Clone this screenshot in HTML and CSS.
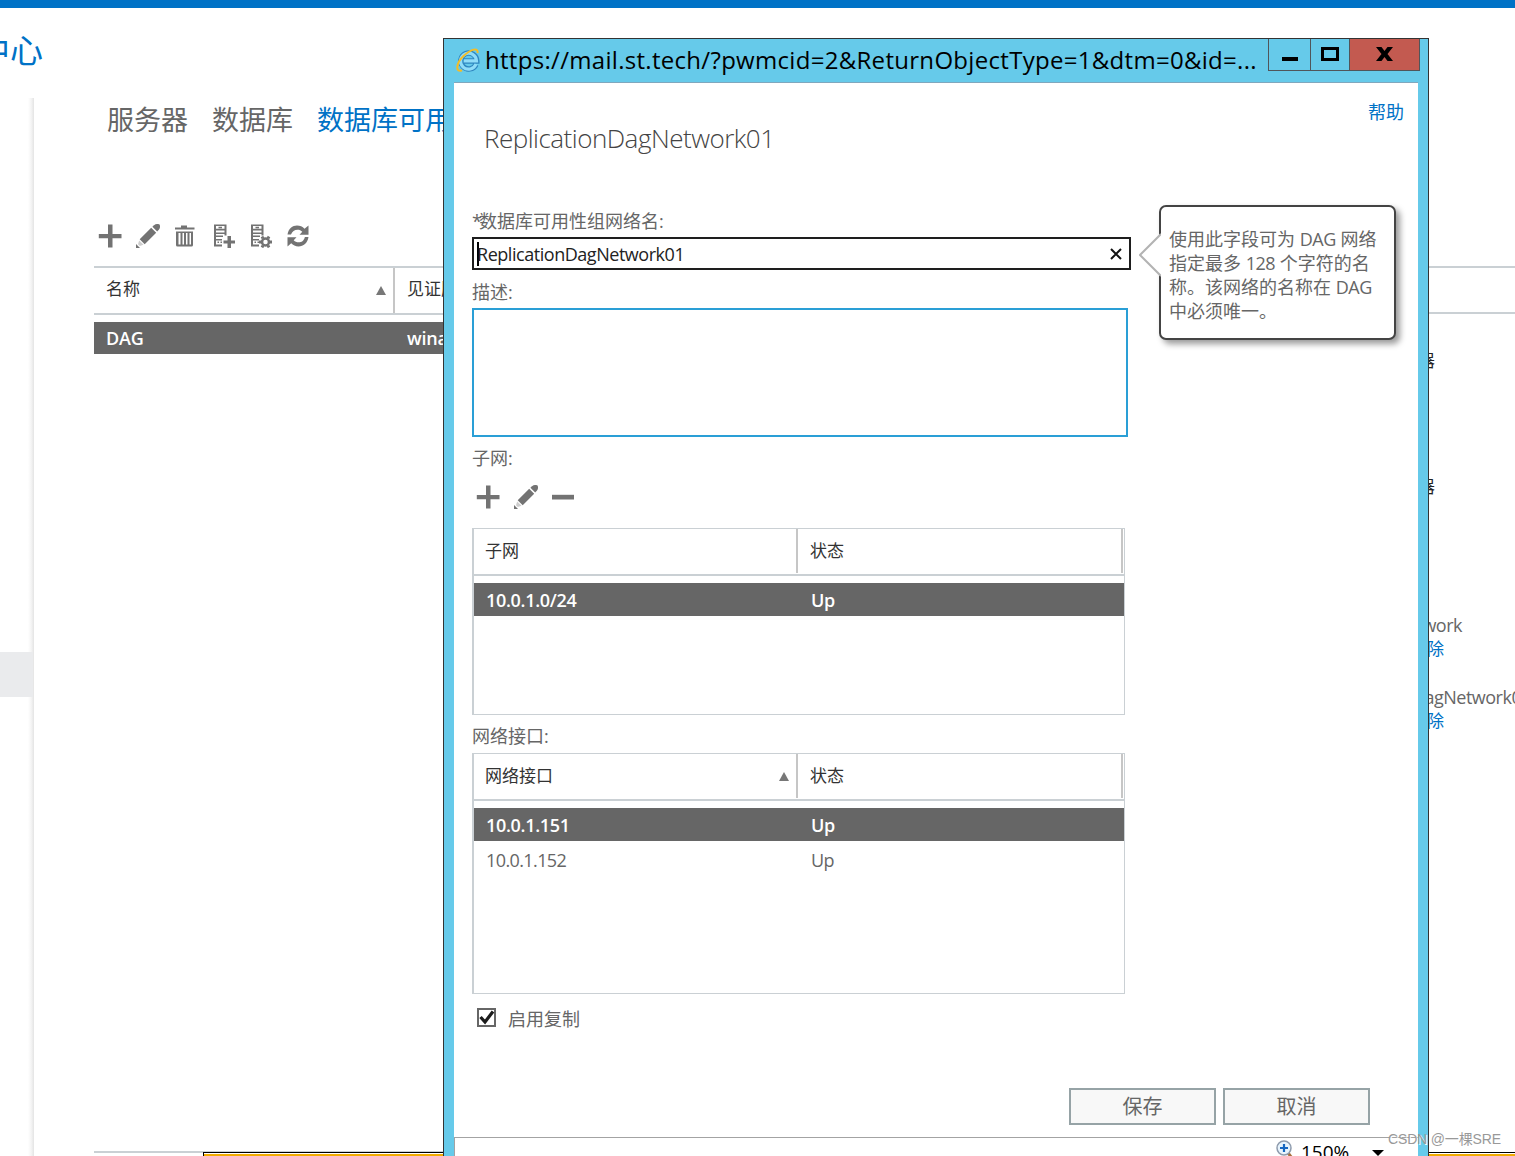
FILE: index.html
```
<!DOCTYPE html>
<html lang="zh-CN">
<head>
    <meta charset="UTF-8">
    <meta name="viewport" content="width=device-width, initial-scale=1.0">
    <title>ReplicationDagNetwork01</title>
    <link rel="stylesheet" href="styles.css">
</head>
<body>
    <svg class="symbols" width="0" height="0">
        <symbol id="icon-add" viewBox="0 0 24 24">
            <path d="M10 .5h4.500v9.500h9v4.300h-9v9.200H10v-9.200H.8V10H10z"/>
        </symbol>
        <symbol id="icon-edit" viewBox="0 0 24 24">
            <path d="M3.700 15.200 15.200 3.700l5 5L8.700 20.200z"/>
            <path d="M16.400 2.800 18 1.200Q19.500 0 21 0h1.200q1.800 0 1.800 1.700V3q0 1.300-1 2.600l-1.800 1.900z"/>
            <path d="M3.200 16.500 7.500 20.800l-3.700 1.200L2 20.200z" opacity=".35"/>
            <path d="M0 20v4h4z"/>
        </symbol>
        <symbol id="icon-remove" viewBox="0 0 24 24">
            <path d="M1 9.800h22v4.700H1z"/>
        </symbol>
        <symbol id="icon-delete" viewBox="0 0 24 24">
            <path d="M8 1.500h6v2h7.500v2H2v-2h6zM3 7.500h17V21q0 1.500-1.500 1.500h-14Q3 22.500 3 21zM5.500 9v11.500h2V9zm4 0v11.500H11V9zm3.500 0v11.500h1.500V9zm3.500 0v11.500H18V9z" fill-rule="evenodd"/>
        </symbol>
        <symbol id="icon-server" viewBox="0 0 24 24">
            <path d="M3 .5h12.500v11h-2V10H5v1.500h7v1.500H5v2h6v1.500H5V20.500h6v2H3zM5 2v2.800h8.500V2zM5 6.500v2h8.500v-2zM7.500 2.700h3.500v1.500H7.500zM6.500 17.500H8V19H6.500zM9.500 17.500H11V19H9.500z" fill-rule="evenodd"/>
        </symbol>
        <symbol id="icon-refresh" viewBox="0 0 24 24">
            <path d="M1.500 10.500C2.500 4.500 6.500 1.500 11 1.500c3 0 5.500 1 7.500 3.200L22.500 1.500v9.300h-9l2.800-3C15 6.300 13.500 5.700 11.500 5.700c-3 0-5.300 1.500-6.500 4.800zM22.500 13c-1 6-5 9.500-10 9.500-3 0-5.500-1.200-7.300-3.200L1.500 22.500v-9.300h9l-2.800 3c1.300 1.500 3 2.100 5 2.100 3 0 5-1.300 6.200-5.300z"/>
        </symbol>
    </svg>

    <div class="top-bar"></div>
    <header class="page-title">中心</header>

    <div class="page">
        <nav class="sidebar"><div class="sidebar-selected"></div></nav>
        <main class="content">
            <div class="tabs">
                <span>服务器</span>
                <span>数据库</span>
                <span class="tab-active">数据库可用性组</span>
            </div>
            <div class="toolbar">
                <svg class="icon"><use href="#icon-add"/></svg>
                <svg class="icon"><use href="#icon-edit"/></svg>
                <svg class="icon"><use href="#icon-delete"/></svg>
                <svg class="icon" viewBox="0 0 24 24">
                    <use href="#icon-server"/>
                    <path d="M16.500 12h3.500v4.500h4v3h-4V24h-3.500v-4.500h-4v-3h4z"/>
                </svg>
                <svg class="icon" viewBox="0 0 24 24">
                    <use href="#icon-server"/>
                    <circle cx="17.500" cy="18" r="3.500" fill="none" stroke="#737373" stroke-width="2.500"/>
                    <path d="M15 14.500l-1-2M20 14.500l1-2M15 21.500l-1 2M20 21.500l1 2M13.500 18H11M21.500 18H24" stroke="#737373" stroke-width="2.800"/>
                </svg>
                <svg class="icon"><use href="#icon-refresh"/></svg>
            </div>
            <div class="grid-head">
                <div class="head-cell name-col">名称<i class="sort-arrow"></i></div>
                <div class="head-cell">见证服务器</div>
            </div>
            <div class="grid-row selected">
                <span class="name-col">DAG</span>
                <span>winad</span>
            </div>
            <div class="grid-end"></div>
        </main>
        <aside class="details">
            <div class="details-head"></div>
            <div class="details-body">
                <p class="dark">服务器</p>
                <p class="dark second">服务器</p>
                <p class="network">MapiDagNetwork</p>
                <p class="link">删除</p>
                <p class="network second-network">ReplicationDagNetwork01</p>
                <p class="link">删除</p>
            </div>
        </aside>
    </div>
    <div class="notice"></div>

    <section class="window">
        <div class="title-bar">
            <svg class="ie-logo" viewBox="0 0 24 24">
                <path d="M20 16.500A8 8 0 1 1 20.800 13H8" fill="none" stroke="#2f86c0" stroke-width="5.400"/>
                <path d="M20 16A8 8 0 1 1 20.500 12.800H8" fill="none" stroke="#8fdcf8" stroke-width="3.200"/>
                <path d="M6 22.200C-1 25 0 15 7.500 8S22.500-1 21.500 5" fill="none" stroke="#f3bd27" stroke-width="2"/>
            </svg>
            <span class="address">https://mail.st.tech/?pwmcid=2&amp;ReturnObjectType=1&amp;dtm=0&amp;id=...</span>
            <div class="controls">
                <div class="control minimize"><i></i></div>
                <div class="control maximize"><i></i></div>
                <div class="control close">
                    <svg width="17" height="14" viewBox="0 0 17 14"><path d="M0 0h5.500l3 4 3-4H17l-5.500 7 5.500 7h-5.500l-3-4-3 4H0l5.500-7z"/></svg>
                </div>
            </div>
        </div>
        <div class="window-body">
            <div class="help"><span>帮助</span></div>
            <h1>ReplicationDagNetwork01</h1>
            <div class="form">
                <label class="field-label"><span class="required">*</span>数据库可用性组网络名:</label>
                <div class="text-input">
                    <i class="caret"></i>
                    <span>ReplicationDagNetwork01</span>
                    <svg class="clear" viewBox="0 0 12 12"><path d="M1 1l10 10M11 1L1 11" stroke="#111" stroke-width="2"/></svg>
                </div>
                <label class="field-label describe">描述:</label>
                <div class="text-area"></div>
                <label class="field-label subnet">子网:</label>
                <div class="toolbar small">
                    <svg class="icon"><use href="#icon-add"/></svg>
                    <svg class="icon"><use href="#icon-edit"/></svg>
                    <svg class="icon"><use href="#icon-remove"/></svg>
                </div>
                <div class="list">
                    <div class="list-head">
                        <div>子网</div>
                        <div>状态</div>
                    </div>
                    <div class="list-row selected"><span>10.0.1.0/24</span><span>Up</span></div>
                </div>
                <label class="field-label interface">网络接口:</label>
                <div class="list tall">
                    <div class="list-head">
                        <div>网络接口<i class="sort-arrow"></i></div>
                        <div>状态</div>
                    </div>
                    <div class="list-row selected"><span>10.0.1.151</span><span>Up</span></div>
                    <div class="list-row"><span>10.0.1.152</span><span>Up</span></div>
                </div>
                <div class="check-row">
                    <svg class="checkbox" viewBox="0 0 19 19">
                        <rect x="1" y="1" width="17" height="17" fill="#fff" stroke="#666" stroke-width="2"/>
                        <path d="M3.500 9l4.500 5L16 3.500" fill="none" stroke="#1c1c1c" stroke-width="3.200"/>
                    </svg>
                    <span>启用复制</span>
                </div>
            </div>
            <div class="buttons">
                <div class="button">保存</div>
                <div class="button">取消</div>
            </div>
            <div class="status-bar">
                <svg class="zoom-icon" viewBox="0 0 18 22">
                    <path d="M12 13l4 5" stroke="#a8703c" stroke-width="3"/>
                    <circle cx="8" cy="8" r="7" fill="#e8f4fd" stroke="#8e9bad" stroke-width="1.500"/>
                    <path d="M8 4v8M4 8h8" stroke="#1667c1" stroke-width="2.200"/>
                </svg>
                <span>150%</span>
                <i class="down-arrow"></i>
            </div>
        </div>
        <div class="callout">
            <svg class="callout-tip" viewBox="0 0 22 44"><path d="M22 1L1 22l21 21" fill="#fff" stroke="#b3b3b3" stroke-width="2"/></svg>
            使用此字段可为 <b>DAG</b> 网络<br>
            指定最多 <b>128</b> 个字符的名<br>
            称。该网络的名称在 <b>DAG</b><br>
            中必须唯一。
        </div>
    </section>
    <div class="watermark">CSDN @一棵SRE</div>
</body>
</html>
```
FILE: styles.css
```
* {
    box-sizing: border-box;
}

body {
    position: relative;
    display: flex;
    flex-direction: column;
    width: 1515px;
    height: 1156px;
    margin: 0;
    overflow: hidden;
    background-color: #fff;
    color: #666;
    font-family: "Open Sans", "Noto Sans CJK SC", sans-serif;
    font-size: 17px;
    white-space: nowrap;
}

p, h1 {
    margin: 0;
}

.symbols {
    position: absolute;
}

.top-bar {
    height: 8px;
    background-color: #0072c6;
}

.page-title {
    height: 90px;
    margin-left: -23px;
    padding-top: 20px;
    color: #0072c6;
    font-size: 33px;
    line-height: 46px;
}

.page {
    display: flex;
    flex-shrink: 0;
    height: 1058px;
}

.sidebar {
    width: 34px;
    padding-top: 554px;
    background: linear-gradient(to right, #fff 28px, #f5f5f5 31px, #e4e4e4 34px);
}

.sidebar-selected {
    width: 33px;
    height: 45px;
    background-color: #eaebed;
}

.content {
    display: flex;
    flex-direction: column;
    width: 1335px;
    padding-left: 60px;
}

.tabs {
    display: flex;
    gap: 24px;
    height: 126px;
    padding-left: 13px;
    font-size: 27px;
    line-height: 44px;
}

.tab-active {
    color: #0072c6;
}

.toolbar {
    display: flex;
    gap: 13.5px;
    height: 42px;
    padding-left: 4px;
}

.icon {
    width: 24px;
    height: 24px;
    fill: #737373;
}

.grid-head {
    display: flex;
    height: 49px;
    border-top: 2px solid #cad0d4;
    border-bottom: 2px solid #cad0d4;
    color: #333;
    line-height: 43px;
}

.head-cell {
    display: flex;
    justify-content: space-between;
    padding-left: 12px;
    line-height: 41px;
}

.name-col {
    width: 301px;
}

.head-cell.name-col {
    padding-right: 7px;
    border-right: 2px solid #c6c6c6;
}

.sort-arrow {
    height: 0;
    margin-top: 18px;
    border: 5.5px solid transparent;
    border-top: 0;
    border-bottom: 9px solid #777;
}

.grid-row {
    display: flex;
    height: 32px;
    margin-top: 7px;
    padding-left: 12px;
    font-size: 18px;
    letter-spacing: -0.2px;
    line-height: 33px;
}

.selected {
    background-color: #666;
    color: #fff;
    font-weight: 600;
}

.grid-end {
    margin-top: auto;
    margin-bottom: 3px;
    border-bottom: 2px solid #cad0d4;
}

.details {
    display: flex;
    flex-direction: column;
    width: 146px;
    padding-top: 168px;
}

.details-head {
    height: 48px;
    border-top: 2px solid #cad0d4;
    border-bottom: 2px solid #cad0d4;
}

.details-body {
    display: flex;
    flex-direction: column;
    padding-top: 35px;
}

/* text on this pane ends at a fixed edge and runs off behind the window */
.details-body p {
    width: 75px;
    height: 24px;
    direction: rtl;
    line-height: 24px;
}

.details-body .dark {
    width: 66px;
    color: #222;
}

.details-body .second {
    margin-top: 102px;
}

.details-body .network {
    width: 93px;
    margin-top: 114px;
    font-size: 18px;
    letter-spacing: -0.5px;
}

.details-body .second-network {
    width: 162px;
    margin-top: 24px;
}

.details-body .link {
    color: #0072c6;
}

.notice {
    flex-shrink: 0;
    height: 4px;
    margin-top: -4px;
    margin-left: 203px;
    border-top: 1px solid #000;
    border-left: 1px solid #000;
    background: linear-gradient(#fff 1px, #f2ac00 1px);
}

.window {
    position: absolute;
    top: 38px;
    left: 443px;
    width: 986px;
    height: 1130px;
    padding: 0 10px;
    border: 1px solid #333;
    background-color: #66caea;
}

.title-bar {
    display: flex;
    height: 43px;
    padding-left: 2px;
    color: #000;
}

.ie-logo {
    flex-shrink: 0;
    width: 24px;
    height: 24px;
    margin-top: 9px;
}

.address {
    flex-shrink: 0;
    width: 788px;
    padding-left: 5px;
    font-size: 24px;
    letter-spacing: 0.3px;
    line-height: 42px;
}

.controls {
    display: flex;
    flex-shrink: 0;
    width: 152px;
    height: 32px;
    border: 1px solid #50555a;
    border-top: 0;
}

.control {
    display: flex;
    justify-content: center;
    align-items: center;
    width: 42px;
    border-right: 1px solid #50555a;
}

.minimize i {
    width: 16px;
    height: 4px;
    margin-top: 9px;
    background-color: #000;
}

.maximize {
    width: 39px;
}

.maximize i {
    width: 18px;
    height: 14px;
    margin-top: -1px;
    border: 3px solid #000;
}

.close {
    width: 69px;
    padding-bottom: 1px;
    border: 0;
    background-color: #c35a50;
}

.window-body {
    display: flex;
    flex-direction: column;
    height: 1090px;
    border-top: 1px solid #80a7bd;
    background-color: #fff;
}

.help {
    display: flex;
    justify-content: flex-end;
    height: 36px;
    padding: 16px 14px 0 0;
    color: #0072c6;
    font-size: 18px;
    line-height: 26px;
}

h1 {
    height: 90px;
    padding-left: 30px;
    color: #444;
    font-size: 26px;
    font-weight: 300;
    letter-spacing: -0.5px;
    line-height: 38px;
}

.form {
    display: flex;
    flex-direction: column;
    height: 879px;
    padding-left: 18px;
}

.field-label {
    height: 28px;
    font-size: 18px;
    line-height: 25px;
}

.required {
    letter-spacing: -3px;
}

.text-input {
    display: flex;
    align-items: center;
    width: 659px;
    height: 33px;
    padding: 0 7px 0 3px;
    border: 2px solid #1e1e1e;
    color: #222;
    font-size: 18px;
    letter-spacing: -0.46px;
}

.caret {
    width: 2px;
    height: 24px;
    margin-right: -2px;
    background-color: #000;
}

.clear {
    width: 12px;
    height: 12px;
    margin-left: auto;
}

.describe {
    height: 38px;
    padding-top: 10px;
}

.text-area {
    width: 656px;
    height: 129px;
    border: 2px solid #2a9fd6;
}

.subnet {
    height: 48px;
    padding-top: 9px;
}

.toolbar.small {
    height: 43px;
}

.list {
    width: 653px;
    height: 187px;
    border: 1px solid #cad0d4;
    border-left-width: 2px;
}

.list.tall {
    height: 241px;
}

.list-head {
    display: flex;
    height: 47px;
    margin-bottom: 7px;
    border-bottom: 2px solid #cad0d4;
    color: #333;
    line-height: 44px;
}

.list-head div {
    display: flex;
    justify-content: space-between;
    width: 324px;
    height: 44px;
    padding: 0 7px 0 11px;
    border-right: 2px solid #c6c6c6;
}

.list-head div + div {
    width: 325px;
    padding-left: 12px;
}

.list-row {
    display: flex;
    height: 33px;
    margin-bottom: 2px;
    padding-left: 12px;
    font-size: 18px;
    letter-spacing: -0.6px;
    line-height: 34px;
}

.list-row.selected {
    letter-spacing: -0.3px;
}

.list-row span {
    flex-shrink: 0;
    width: 325px;
}

.list-row span + span {
    width: 300px;
}

.interface {
    height: 38px;
    padding-top: 9px;
}

.check-row {
    display: flex;
    align-items: center;
    gap: 12px;
    padding: 12px 0 0 5px;
    font-size: 18px;
    line-height: 26px;
}

.checkbox {
    width: 19px;
    height: 19px;
    margin-top: -3px;
}

.buttons {
    display: flex;
    justify-content: flex-end;
    gap: 7px;
    height: 49px;
    padding-right: 48px;
}

.button {
    width: 147px;
    height: 37px;
    border: 2px solid #96a3a6;
    background-color: #f8f8f8;
    font-size: 20px;
    line-height: 33px;
    text-align: center;
}

.status-bar {
    display: flex;
    height: 30px;
    padding: 2px 0 0 821px;
    border-top: 1px solid #a3a3a3;
    border-left: 1px solid #a3a3a3;
    color: #000;
    font-size: 19px;
    line-height: 25px;
}

.zoom-icon {
    width: 18px;
    height: 22px;
    margin-right: 7px;
}

.down-arrow {
    height: 0;
    margin: 10px 0 0 23px;
    border: 6px solid transparent;
    border-top: 6px solid #000;
    border-bottom: 0;
}

.callout {
    position: absolute;
    top: 166px;
    left: 715px;
    width: 237px;
    height: 135px;
    padding: 20px 0 0 8px;
    border: 2px solid #444;
    border-radius: 7px;
    background-color: #fff;
    box-shadow: 4px 4px 6px rgba(0, 0, 0, 0.4);
    font-size: 18px;
    line-height: 24px;
}

.callout b {
    font-weight: 400;
    letter-spacing: -0.5px;
    line-height: 0;
}

.callout-tip {
    position: absolute;
    top: 26px;
    left: -22px;
    width: 22px;
    height: 44px;
}

.watermark {
    position: absolute;
    top: 1129px;
    left: 1388px;
    color: #999;
    font-family: "Liberation Sans", "Noto Sans CJK SC", sans-serif;
    font-size: 14px;
    letter-spacing: -0.15px;
    line-height: 21px;
    text-shadow: 1px 1px #fff;
}
```
